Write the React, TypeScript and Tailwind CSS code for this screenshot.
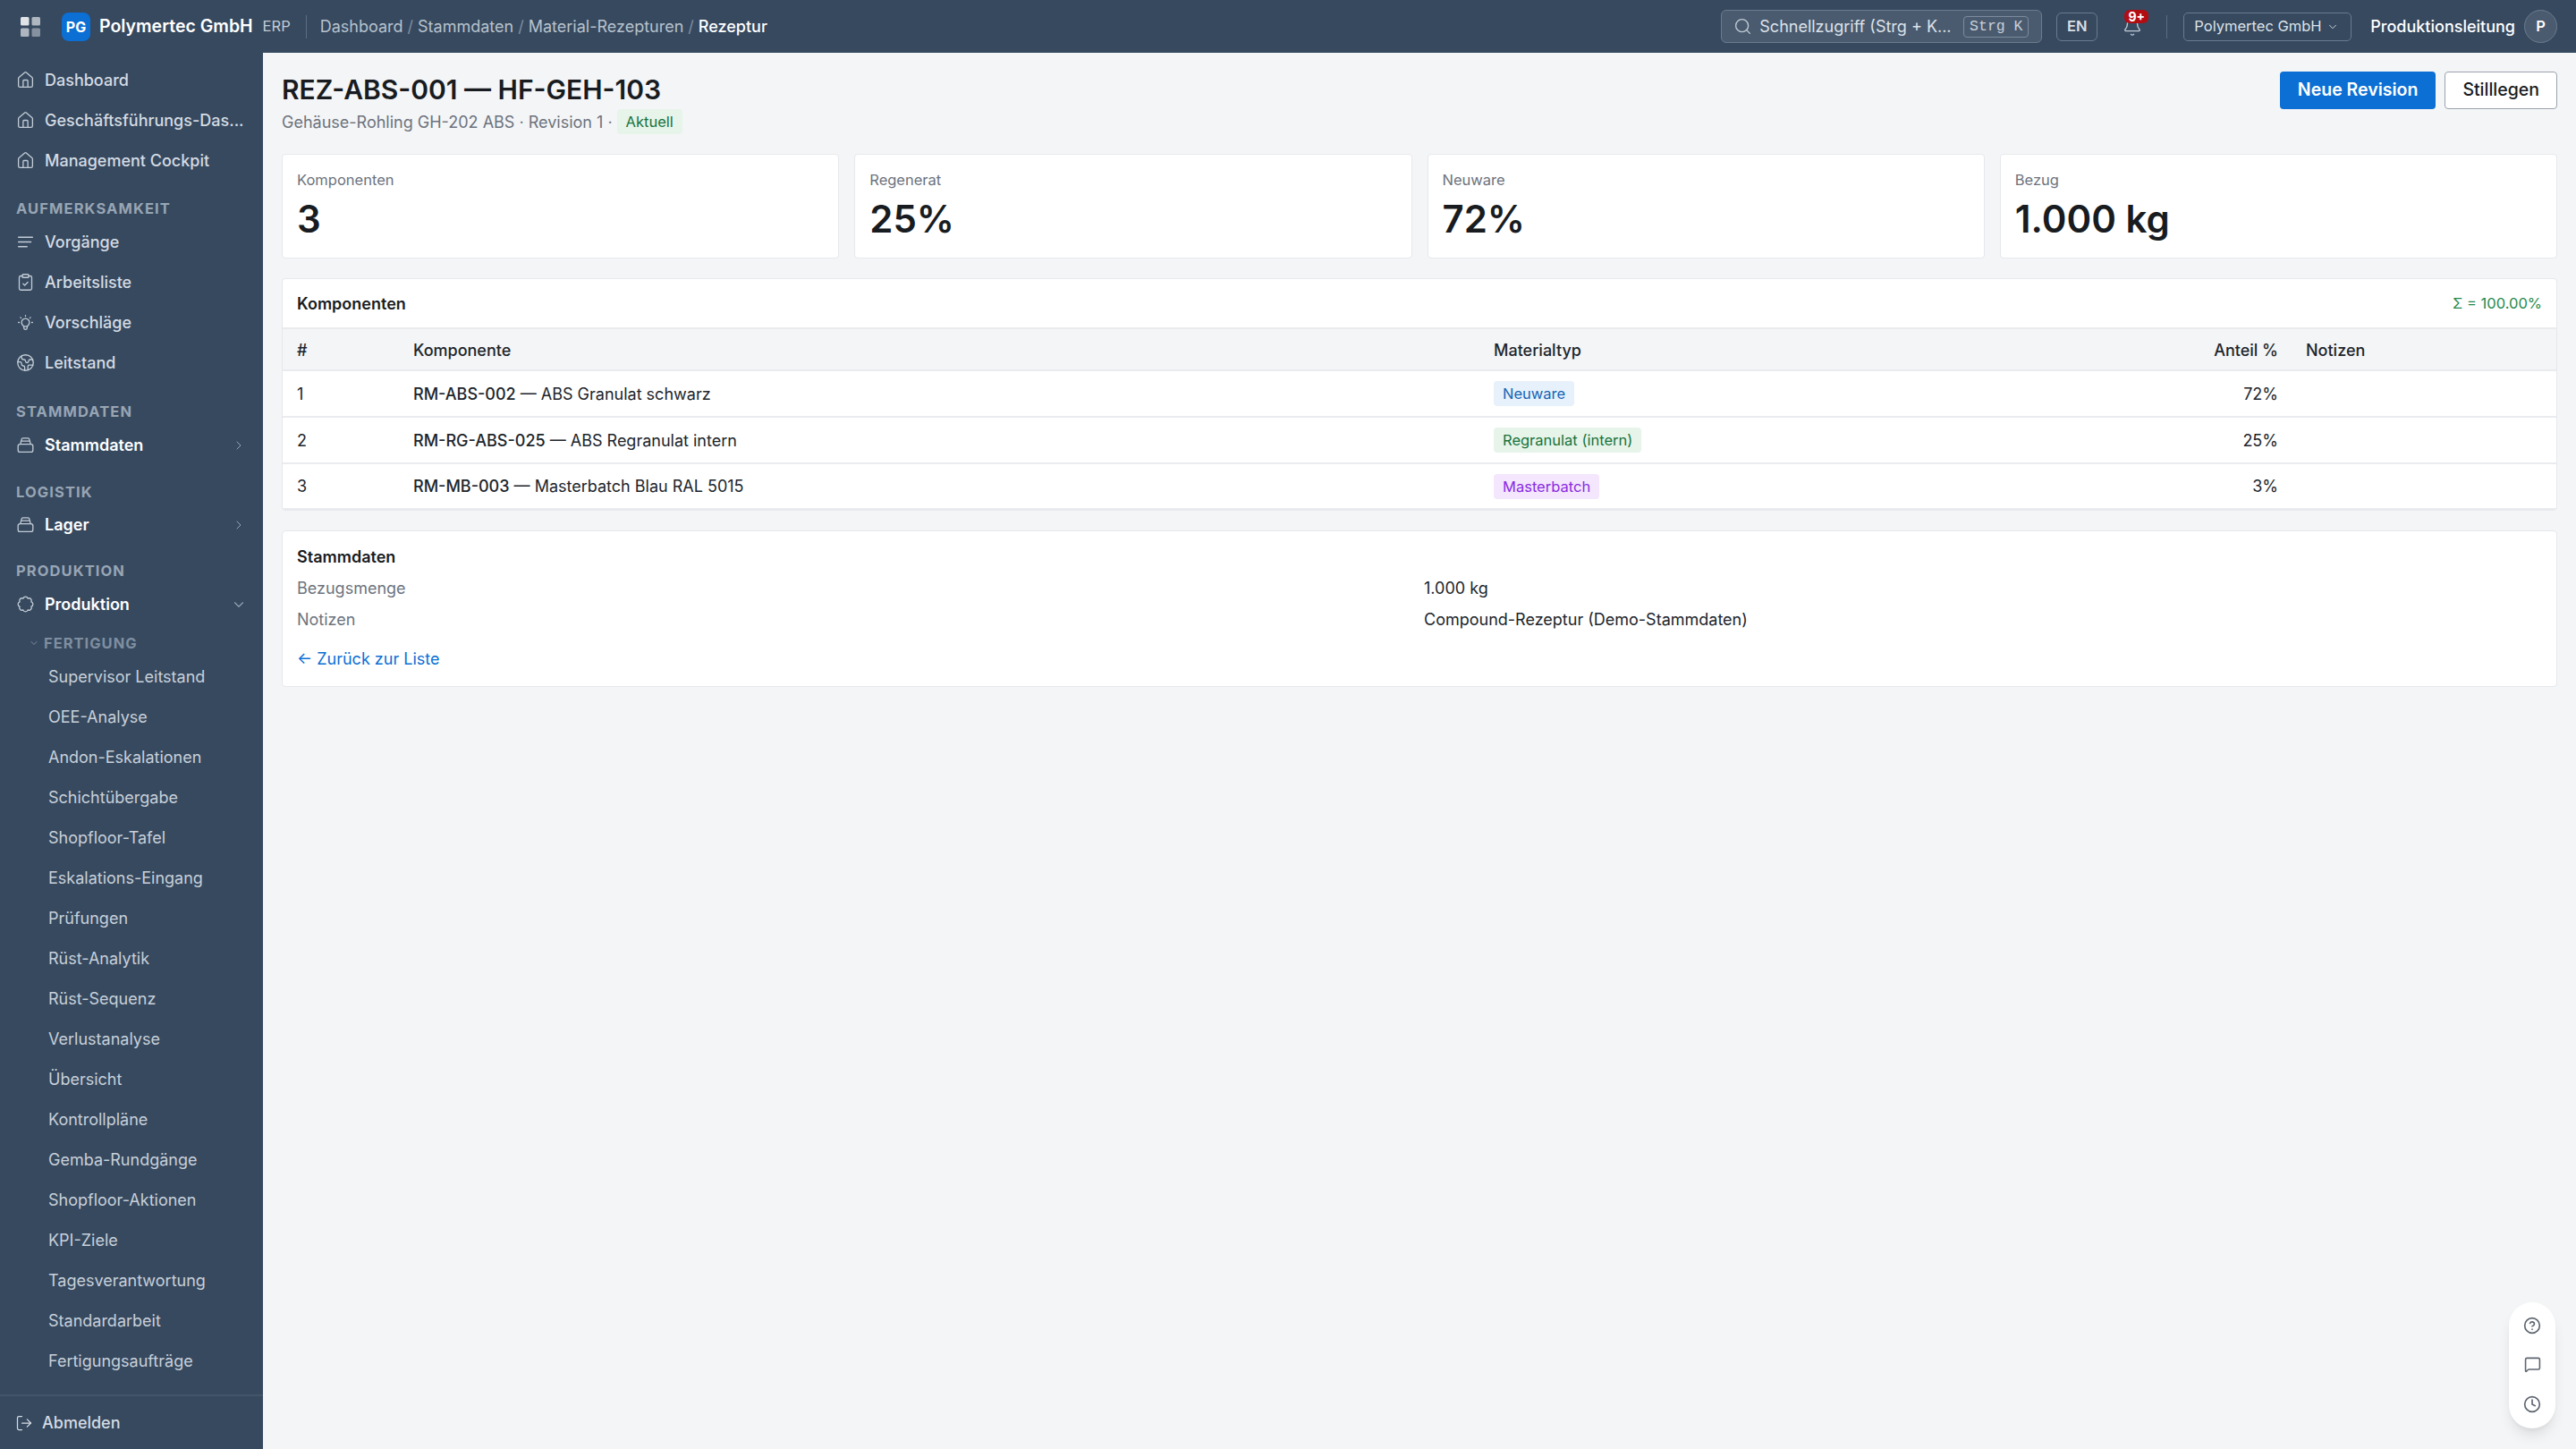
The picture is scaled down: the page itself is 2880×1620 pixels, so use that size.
import { Bell, ChevronDown, ChevronRight, CircleHelp, ClipboardCheck, Clock, Earth, House, LogOut, MessageSquare, Search } from 'lucide-react';
import { TbBulb } from 'react-icons/tb';
import React from 'react';

const fertigung = [
  'Supervisor Leitstand', 'OEE-Analyse', 'Andon-Eskalationen', 'Schichtübergabe', 'Shopfloor-Tafel',
  'Eskalations-Eingang', 'Prüfungen', 'Rüst-Analytik', 'Rüst-Sequenz', 'Verlustanalyse', 'Übersicht',
  'Kontrollpläne', 'Gemba-Rundgänge', 'Shopfloor-Aktionen', 'KPI-Ziele', 'Tagesverantwortung',
  'Standardarbeit', 'Fertigungsaufträge',
];

const GridIcon = () => (
  <svg className="w-[22px] h-[22px] ml-[23px] shrink-0" viewBox="0 0 22 22" fill="#fff">
    <rect x="0" y="0" width="9.5" height="9.5" rx="1.5" opacity="0.85" />
    <rect x="12.5" y="0" width="9.5" height="9.5" rx="1.5" opacity="0.6" />
    <rect x="0" y="12.5" width="9.5" height="9.5" rx="1.5" opacity="0.6" />
    <rect x="12.5" y="12.5" width="9.5" height="9.5" rx="1.5" opacity="0.4" />
  </svg>
);

const LinesIcon = ({ className }: { className?: string }) => (
  <svg className={className} viewBox="0 0 24 24" fill="none" stroke="currentColor" strokeWidth={1.5} strokeLinecap="round">
    <path d="M3 6h18M3 12h16M3 18h11" />
  </svg>
);

const StackIcon = ({ className }: { className?: string }) => (
  <svg className={className} viewBox="0 0 24 24" fill="none" stroke="currentColor" strokeWidth={1.5} strokeLinejoin="round">
    <rect x="2.5" y="11" width="19" height="10" rx="2.5" />
    <path d="M5.5 11 7 4.8A2 2 0 0 1 9 3.2h6a2 2 0 0 1 2 1.6l1.5 6.2M6.5 7h11" />
  </svg>
);

// scalloped gear outline, 8 bumps around the centre
const gearPoint = (i: number) => {
  const a = ((i + 0.5) * Math.PI) / 4;
  return `${(12 + 7.9 * Math.cos(a)).toFixed(2)} ${(12 + 7.9 * Math.sin(a)).toFixed(2)}`;
};
const gearPath = `M${gearPoint(0)} ` + [1, 2, 3, 4, 5, 6, 7, 8].map((i) => `A3.15 3.15 0 0 1 ${gearPoint(i)}`).join(' ') + 'Z';

const GearIcon = ({ className }: { className?: string }) => (
  <svg className={className} viewBox="0 0 24 24" fill="none" stroke="currentColor" strokeWidth={1.5} strokeLinejoin="round">
    <path d={gearPath} />
  </svg>
);

type NavProps = { icon: any; label: string; bold?: boolean; chevron?: 'right' | 'down' };

const NavItem = ({ icon: Icon, label, bold, chevron }: NavProps) => (
  <div className={`h-[45px] flex items-center pl-[18px] pr-[19px] text-[18px] ${bold ? 'font-semibold text-white' : 'font-medium text-[#d5dbe3]'}`}>
    <Icon className="w-[21px] h-[21px] mr-[11px] shrink-0 text-[#c3ccd6]" strokeWidth={1.5} />
    <span className="truncate">{label}</span>
    {chevron === 'right' && <ChevronRight className="ml-auto w-[16px] h-[16px] text-[#98a5b4]" strokeWidth={1.5} />}
    {chevron === 'down' && <ChevronDown className="ml-auto -mr-[1px] w-[18px] h-[18px] text-[#98a5b4]" strokeWidth={1.5} />}
  </div>
);

const Group = ({ label, cls }: { label: string; cls: string }) => (
  <div className={`text-[16.5px] leading-[20px] font-bold tracking-[1.1px] text-[#98a5b4] pl-[18px] ${cls}`}>{label}</div>
);

const Stat = ({ label, value }: { label: string; value: string }) => (
  <div className="flex-1 h-[117px] bg-white border border-[#e6e8ec] rounded-[4px] pl-[16px] pt-[17px]">
    <div className="text-[16.5px] leading-[22px] text-[#6c737d]">{label}</div>
    <div className="text-[42px] leading-[50px] mt-[8px] font-semibold text-[#181c21]">{value}</div>
  </div>
);

type RowProps = { n: string; code: string; name: string; badge: string; badgeCls: string; pct: string; h: string };

const Row = ({ n, code, name, badge, badgeCls, pct, h }: RowProps) => (
  <div className={`flex items-center border-b-2 border-[#e9ebef] text-[18px] text-[#20252b] ${h}`}>
    <div className="w-[146px] pl-[16px]">{n}</div>
    <div className="w-[1208px]">
      <span className="font-medium">{code}</span> — {name}
    </div>
    <div className="flex-1">
      <span className={`inline-block rounded-[4px] px-[10px] text-[16.5px] leading-[28px] ${badgeCls}`}>{badge}</span>
    </div>
    <div className="w-[100px] text-right">{pct}</div>
    <div className="w-[311px]" />
  </div>
);

export default function App() {
  return (
    <div className="w-[2880px] h-[1620px] flex flex-col overflow-hidden bg-[#f4f5f7] [font-family:Inter,sans-serif]">
      <header className="h-[59px] shrink-0 bg-[#36495f] flex items-center text-white">
        <GridIcon />
        <div className="ml-[24px] w-[32px] h-[32px] rounded-[8px] bg-[#0b6fd4] flex items-center justify-center text-[16px] font-bold">PG</div>
        <span className="ml-[10px] text-[19.5px] font-semibold">Polymertec GmbH</span>
        <span className="ml-[11px] text-[16.5px] text-[#c3ccd6]">ERP</span>
        <div className="ml-[17px] w-px h-[26px] bg-[#5c6d81]" />
        <nav className="ml-[15px] text-[18px] text-[#b8c2cd] flex gap-[5px]">
          <span>Dashboard</span><span className="text-[#7f8ea0]">/</span>
          <span>Stammdaten</span><span className="text-[#7f8ea0]">/</span>
          <span>Material-Rezepturen</span><span className="text-[#7f8ea0]">/</span>
          <span className="text-white font-medium">Rezeptur</span>
        </nav>
        <div className="ml-auto flex items-center pr-[21px]">
          <div className="w-[359px] h-[37px] rounded-[6px] bg-[#4a5b70] border border-[#6b7b8e] flex items-center pl-[13px] pr-[14px] text-[18px] text-[#dde2e8]">
            <Search className="w-[21px] h-[21px] mr-[8px] shrink-0 text-[#c3ccd6]" strokeWidth={1.5} />
            <span className="flex-1 whitespace-nowrap">Schnellzugriff (Strg + K...</span>
            <span className="border border-[#7c8b9c] rounded-[4px] w-[73px] text-center leading-[22px] text-[16.5px] text-[#c8d0d9] whitespace-nowrap [font-family:'Liberation_Mono',monospace]">Strg K</span>
          </div>
          <div className="ml-[16px] w-[46px] h-[32px] rounded-[6px] border border-[#6b7b8e] flex items-center justify-center text-[16.5px] font-semibold text-[#d9dee4]">EN</div>
          <div className="ml-[27px] w-[24px] h-[32px] relative flex items-center justify-center">
            <Bell className="w-[22px] h-[22px] shrink-0 text-[#c3ccd6]" strokeWidth={1.5} />
            <span className="absolute top-[-3px] left-[3px] w-[27px] h-[15px] text-center rounded-[6px] bg-[#b30d14] text-white text-[14px] leading-[15px] font-bold">9+</span>
          </div>
          <div className="ml-[26px] w-px h-[26px] bg-[#5c6d81]" />
          <div className="ml-[18px] w-[188px] h-[32px] rounded-[5px] border border-[#6b7b8e] flex items-center pl-[11px] text-[16.5px] text-[#dde2e8] whitespace-nowrap">
            Polymertec GmbH
            <ChevronDown className="w-[14px] h-[14px] ml-[5px]" strokeWidth={1.5} />
          </div>
          <span className="ml-[21px] text-[18px] font-medium">Produktionsleitung</span>
          <div className="ml-[10px] w-[37px] h-[37px] rounded-full bg-[#4a5b70] border border-[#6b7b8e] flex items-center justify-center text-[16.5px] font-semibold">P</div>
        </div>
      </header>

      <div className="flex-1 flex min-h-0">
        <aside className="w-[294px] shrink-0 bg-[#36495f] flex flex-col">
          <div className="flex-1 pt-[8px] overflow-hidden">
            <NavItem icon={House} label="Dashboard" />
            <NavItem icon={House} label="Geschäftsführungs-Das..." />
            <NavItem icon={House} label="Management Cockpit" />
            <Group label="AUFMERKSAMKEIT" cls="mt-[21px] mb-[5px]" />
            <NavItem icon={LinesIcon} label="Vorgänge" />
            <NavItem icon={ClipboardCheck} label="Arbeitsliste" />
            <NavItem icon={TbBulb} label="Vorschläge" />
            <NavItem icon={Earth} label="Leitstand" />
            <Group label="STAMMDATEN" cls="mt-[22px] mb-[5px]" />
            <NavItem icon={StackIcon} label="Stammdaten" bold chevron="right" />
            <Group label="LOGISTIK" cls="mt-[20px] mb-[4px]" />
            <NavItem icon={StackIcon} label="Lager" bold chevron="right" />
            <Group label="PRODUKTION" cls="mt-[19px] mb-[5px]" />
            <NavItem icon={GearIcon} label="Produktion" bold chevron="down" />
            <div className="flex items-center pl-[32px] pt-[6px] h-[36px] text-[16.5px] font-bold tracking-[1px] text-[#7f8ea0]">
              <ChevronDown className="w-[12px] h-[12px] mr-[5px]" strokeWidth={2} />FERTIGUNG
            </div>
            {fertigung.map((f) => (
              <div key={f} className="h-[45px] flex items-center pl-[54px] text-[18px] text-[#c8d0da]">{f}</div>
            ))}
          </div>
          <div className="h-[61px] border-t-2 border-[#435569] flex items-center pl-[17px] text-[18px] font-medium text-[#d5dbe3]">
            <LogOut className="w-[20px] h-[20px] mr-[10px]" strokeWidth={1.5} />Abmelden
          </div>
        </aside>

        <main className="flex-1 min-w-0 px-[21px] pt-[20px] relative">
          <div className="flex items-start justify-between">
            <div>
              <h1 className="text-[30px] leading-[42px] font-semibold text-[#181c21]">REZ-ABS-001 — HF-GEH-103</h1>
              <div className="mt-[1px] flex items-center text-[18px] text-[#6c737d]">
                Gehäuse-Rohling GH-202 ABS · Revision 1 ·
                <span className="ml-[5px] rounded-[4px] bg-[#e6f4ea] text-[#16733a] text-[16.5px] px-[10px] leading-[28px]">Aktuell</span>
              </div>
            </div>
            <div className="flex gap-[10px] mt-[1px]">
              <button className="h-[42px] px-[20px] rounded-[4px] bg-[#0b6fd4] text-white text-[19.5px] font-semibold">Neue Revision</button>
              <button className="h-[42px] px-[19px] rounded-[4px] bg-white border border-[#9aa3ad] text-[#181c21] text-[19.5px] font-medium">Stilllegen</button>
            </div>
          </div>

          <div className="mt-[22px] flex gap-[17px]">
            <Stat label="Komponenten" value="3" />
            <Stat label="Regenerat" value="25%" />
            <Stat label="Neuware" value="72%" />
            <Stat label="Bezug" value="1.000 kg" />
          </div>

          <section className="mt-[22px] bg-white border border-[#e6e8ec] rounded-[4px]">
            <div className="h-[56px] flex items-center justify-between px-[16px] border-b-2 border-[#e9ebef]">
              <span className="text-[18px] font-semibold text-[#181c21]">Komponenten</span>
              <span className="text-[16.5px] text-[#1f8a4c]">Σ = 100.00%</span>
            </div>
            <div className="h-[47px] pt-[1px] flex items-center bg-[#f4f5f7] border-b-2 border-[#e9ebef] text-[18px] font-medium text-[#20252b]">
              <div className="w-[146px] pl-[16px]">#</div>
              <div className="w-[1208px]">Komponente</div>
              <div className="flex-1">Materialtyp</div>
              <div className="w-[100px] text-right">Anteil %</div>
              <div className="w-[311px] pl-[31px]">Notizen</div>
            </div>
            <Row n="1" code="RM-ABS-002" name="ABS Granulat schwarz" badge="Neuware" badgeCls="bg-[#e7f1fb] text-[#1565b5]" pct="72%" h="h-[52px]" />
            <Row n="2" code="RM-RG-ABS-025" name="ABS Regranulat intern" badge="Regranulat (intern)" badgeCls="bg-[#e6f4ea] text-[#16733a]" pct="25%" h="h-[52px]" />
            <Row n="3" code="RM-MB-003" name="Masterbatch Blau RAL 5015" badge="Masterbatch" badgeCls="bg-[#f3e6fd] text-[#8a2be2]" pct="3%" h="h-[51px]" />
          </section>

          <section className="mt-[22px] h-[175px] bg-white border border-[#e6e8ec] rounded-[4px] px-[16px] pt-[16px]">
            <div className="text-[18px] leading-[26px] font-semibold text-[#181c21]">Stammdaten</div>
            <div className="mt-[4px] grid grid-cols-2 gap-x-[10px] text-[18px] leading-[35px]">
              <span className="text-[#6c737d]">Bezugsmenge</span><span className="text-[#20252b]">1.000 kg</span>
              <span className="text-[#6c737d]">Notizen</span><span className="text-[#20252b]">Compound-Rezeptur (Demo-Stammdaten)</span>
            </div>
            <div className="mt-[13px] text-[18px] leading-[27px] text-[#0b6fd4]">← Zurück zur Liste</div>
          </section>

          <div className="absolute right-[23px] bottom-[23px] w-[52px] h-[141px] rounded-full bg-white shadow-lg flex flex-col items-center pt-[16px] text-[#5f6670]">
            <CircleHelp className="w-[20px] h-[20px]" strokeWidth={2} />
            <MessageSquare className="w-[19px] h-[19px] mt-[24px]" strokeWidth={2} />
            <Clock className="w-[20px] h-[20px] mt-[25px]" strokeWidth={2} />
          </div>
        </main>
      </div>
    </div>
  );
}
